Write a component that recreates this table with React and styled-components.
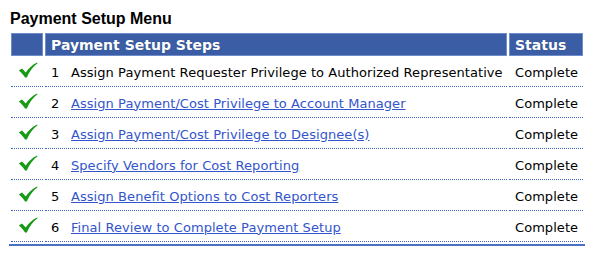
import React from "react";
import styled, { createGlobalStyle } from "styled-components";

const GlobalStyle = createGlobalStyle`
  html, body {
    margin: 0;
    padding: 0;
    background: #ffffff;
  }
`;

const steps = [
  { label: "Assign Payment Requester Privilege to Authorized Representative", link: false },
  { label: "Assign Payment/Cost Privilege to Account Manager", link: true },
  { label: "Assign Payment/Cost Privilege to Designee(s)", link: true },
  { label: "Specify Vendors for Cost Reporting", link: true },
  { label: "Assign Benefit Options to Cost Reporters", link: true },
  { label: "Final Review to Complete Payment Setup", link: true },
];

function CheckIcon() {
  return (
    <svg width="20" height="16" viewBox="0 0 20 16">
      <path
        d="M0.8 8.6 L4 6.4 L7.8 10.4 C10.5 6.4 14 3 19 0.4 L19.5 1.2 C15 4.6 11.6 9 8.8 15.4 L7 15.4 C5.4 12.8 3.2 10.6 0.8 8.6 Z"
        fill="#169a16"
      />
    </svg>
  );
}

export default function App() {
  return (
    <Page>
      <GlobalStyle />
      <Title>Payment Setup Menu</Title>
      <Table>
        <thead>
          <tr>
            <HeadCell />
            <HeadCell>Payment Setup Steps</HeadCell>
            <HeadCell>Status</HeadCell>
          </tr>
        </thead>
        <tbody>
          {steps.map((s, i) => (
            <tr key={i}>
              <IconCell>
                <CheckIcon />
              </IconCell>
              <StepCell>
                <StepNum>{i + 1}</StepNum>
                {s.link ? <StepLink href="#">{s.label}</StepLink> : <span>{s.label}</span>}
              </StepCell>
              <StatusCell>Complete</StatusCell>
            </tr>
          ))}
        </tbody>
      </Table>
    </Page>
  );
}

const Page = styled.div`
  width: 600px;
  height: 262px;
  padding: 10px 0 0 9px;
  box-sizing: border-box;
  background: #ffffff;
`;

const Title = styled.h1`
  margin: 0 0 3px 1px;
  font-family: "Liberation Sans", Arial, sans-serif;
  font-size: 16px;
  font-weight: bold;
  line-height: 18px;
  color: #000000;
`;

const Table = styled.table`
  width: 576px;
  border-collapse: separate;
  border-spacing: 2px;
  border-bottom: 2px solid #4a70c4;
  font-family: "DejaVu Sans", Verdana, sans-serif;
  font-size: 13px;
  color: #000000;
`;

const HeadCell = styled.th`
  height: 23px;
  padding: 0 0 0 5px;
  box-sizing: border-box;
  background: #3a5da6;
  border: 1px solid #6f8ccb;
  color: #ffffff;
  font-size: 14px;
  font-weight: bold;
  text-align: left;
  white-space: nowrap;
  text-shadow: 0 0 1px rgba(0, 0, 0, 0.3);
  &:first-child {
    width: 32px;
    padding: 0;
  }
  &:last-child {
    width: 74px;
  }
`;

const BodyCell = styled.td`
  height: 29px;
  padding: 0;
  box-sizing: border-box;
  border-bottom: 1px dotted #3f63c0;
  vertical-align: middle;
  white-space: nowrap;
  letter-spacing: 0.06px;
`;

const IconCell = styled(BodyCell)`
  text-align: center;
  padding: 0 0 4px 1px;
  line-height: 0;
`;

const StepCell = styled(BodyCell)`
  padding-left: 6px;
`;

const StatusCell = styled(BodyCell)`
  padding-left: 6px;
`;

const StepNum = styled.span`
  display: inline-block;
  width: 20px;
`;

const StepLink = styled.a`
  color: #3355cc;
  text-decoration: underline;
`;
